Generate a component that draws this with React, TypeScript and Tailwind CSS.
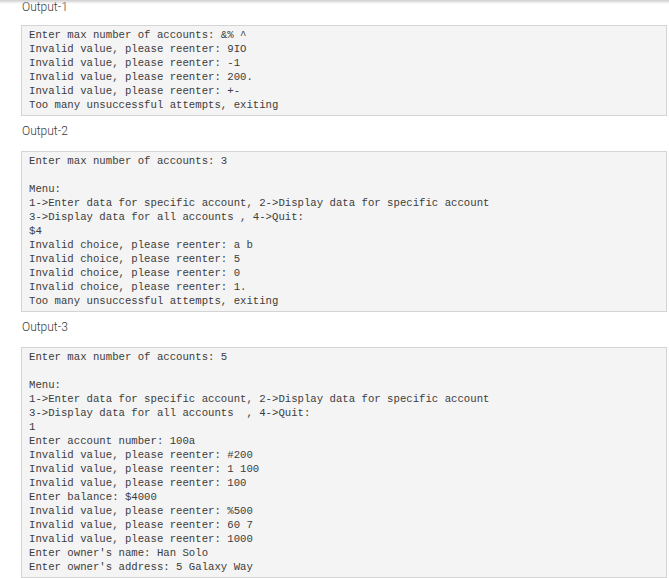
import React from "react";

const outputs: { title: string; lines: string[] }[] = [
  {
    title: "Output-1",
    lines: [
      "Enter max number of accounts: &% ^",
      "Invalid value, please reenter: 9IO",
      "Invalid value, please reenter: -1",
      "Invalid value, please reenter: 200.",
      "Invalid value, please reenter: +-",
      "Too many unsuccessful attempts, exiting",
    ],
  },
  {
    title: "Output-2",
    lines: [
      "Enter max number of accounts: 3",
      "",
      "Menu:",
      "1->Enter data for specific account, 2->Display data for specific account",
      "3->Display data for all accounts , 4->Quit:",
      "$4",
      "Invalid choice, please reenter: a b",
      "Invalid choice, please reenter: 5",
      "Invalid choice, please reenter: 0",
      "Invalid choice, please reenter: 1.",
      "Too many unsuccessful attempts, exiting",
    ],
  },
  {
    title: "Output-3",
    lines: [
      "Enter max number of accounts: 5",
      "",
      "Menu:",
      "1->Enter data for specific account, 2->Display data for specific account",
      "3->Display data for all accounts  , 4->Quit:",
      "1",
      "Enter account number: 100a",
      "Invalid value, please reenter: #200",
      "Invalid value, please reenter: 1 100",
      "Invalid value, please reenter: 100",
      "Enter balance: $4000",
      "Invalid value, please reenter: %500",
      "Invalid value, please reenter: 60 7",
      "Invalid value, please reenter: 1000",
      "Enter owner's name: Han Solo",
      "Enter owner's address: 5 Galaxy Way",
    ],
  },
];

const OutputBlock = ({ title, lines, first }: { title: string; lines: string[]; first?: boolean }) => (
  <section className={first ? "" : "mt-[8px]"}>
    <h4
      className={`pl-[22px] text-[12px] leading-[14px] font-light text-[#3a3a3a] ${first ? "mb-[11px]" : "mb-[13px]"}`}
      style={{ fontFamily: "Roboto, 'Noto Sans', sans-serif" }}
    >
      {title}
    </h4>
    <pre className="ml-[21px] w-[646px] border border-[#d4d4d4] bg-[#f4f4f4] pl-[7px] pt-[2px] pb-[3px] font-['Courier_New','Liberation_Mono',monospace] text-[10.67px] leading-[14px] whitespace-pre text-[#3c3c3c]">
      {lines.map((l) => (l === "" ? " " : l)).join("\n")}
    </pre>
  </section>
);

export default function App() {
  return (
    <div className="relative h-[578px] w-[669px] overflow-hidden bg-white">
      <div className="pointer-events-none absolute inset-x-0 top-0 h-[4px] bg-gradient-to-b from-[#cfcfcf] to-white/0" />
      {outputs.map((o, i) => (
        <OutputBlock key={o.title} title={o.title} lines={o.lines} first={i === 0} />
      ))}
    </div>
  );
}
